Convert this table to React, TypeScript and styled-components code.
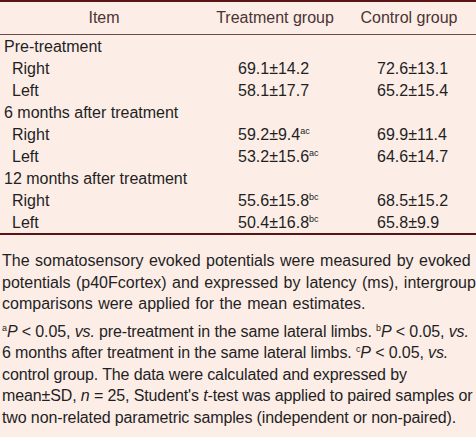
import React from 'react';
import styled, { createGlobalStyle } from 'styled-components';

const GlobalStyle = createGlobalStyle`
    html, body {
        margin: 0;
        padding: 0;
        background: #fdede7;
    }
    body {
        font-family: "Liberation Sans", Arial, sans-serif;
        color: #231f1f;
    }
`;

type Row =
    | { kind: 'group'; label: string }
    | { kind: 'value'; label: string; treat: string; treatSup?: string; ctrl: string };

const rows: Row[] = [
    { kind: 'group', label: 'Pre-treatment' },
    { kind: 'value', label: 'Right', treat: '69.1±14.2', ctrl: '72.6±13.1' },
    { kind: 'value', label: 'Left', treat: '58.1±17.7', ctrl: '65.2±15.4' },
    { kind: 'group', label: '6 months after treatment' },
    { kind: 'value', label: 'Right', treat: '59.2±9.4', treatSup: 'ac', ctrl: '69.9±11.4' },
    { kind: 'value', label: 'Left', treat: '53.2±15.6', treatSup: 'ac', ctrl: '64.6±14.7' },
    { kind: 'group', label: '12 months after treatment' },
    { kind: 'value', label: 'Right', treat: '55.6±15.8', treatSup: 'bc', ctrl: '68.5±15.2' },
    { kind: 'value', label: 'Left', treat: '50.4±16.8', treatSup: 'bc', ctrl: '65.8±9.9' },
];

export default function App() {
    return (
        <>
            <GlobalStyle />
            <Wrapper>
                <Table>
                    <thead>
                        <tr>
                            <HeadCell $width={208}>Item</HeadCell>
                            <HeadCell $width={134}>Treatment group</HeadCell>
                            <HeadCell>Control group</HeadCell>
                        </tr>
                    </thead>
                    <tbody>
                        {rows.map((row, i) =>
                            row.kind === 'group' ? (
                                <tr key={i}>
                                    <GroupCell colSpan={3}>{row.label}</GroupCell>
                                </tr>
                            ) : (
                                <tr key={i}>
                                    <LabelCell>{row.label}</LabelCell>
                                    <ValueCell $pad={30}>
                                        {row.treat}
                                        {row.treatSup && <Sup>{row.treatSup}</Sup>}
                                    </ValueCell>
                                    <ValueCell $pad={35}>{row.ctrl}</ValueCell>
                                </tr>
                            )
                        )}
                    </tbody>
                </Table>
                <Notes>
                    <Note $spread>
                        The somatosensory evoked potentials were measured by evoked potentials
                        (p40Fcortex) and expressed by latency (ms), intergroup comparisons were
                        applied for the mean estimates.
                    </Note>
                    <Note>
                        <Sup>a</Sup><i>P</i> &lt; 0.05, <i>vs.</i> pre-treatment in the same lateral
                        limbs. <Sup>b</Sup><i>P</i> &lt; 0.05, <i>vs.</i> 6 months after treatment in
                        the same lateral limbs. <Sup>c</Sup><i>P</i> &lt; 0.05, <i>vs.</i> control
                        group. The data were calculated and expressed by mean±SD, <i>n</i> = 25,
                        Student's <i>t</i>-test was applied to paired samples or two non-related
                        parametric samples (independent or non-paired).
                    </Note>
                </Notes>
            </Wrapper>
        </>
    );
}

const Wrapper = styled.div`
    width: 476px;
    font-size: 16px;
`;

const Table = styled.table`
    width: 100%;
    border-collapse: collapse;
    border-top: 2px solid #5a1616;
    border-bottom: 2px solid #5a1616;
    table-layout: fixed;
`;

const HeadCell = styled.th<{ $width?: number }>`
    ${(p) => (p.$width ? `width: ${p.$width}px;` : '')}
    font-weight: 400;
    color: #4a3434;
    text-align: center;
    height: 32px;
    padding: 0;
    border-bottom: 1px solid #6b4a4a;
`;

const GroupCell = styled.td`
    padding: 0 0 0 4px;
    height: 22px;
    line-height: 21px;
    white-space: nowrap;
`;

const LabelCell = styled.td`
    padding: 0 0 0 12px;
    height: 22px;
    line-height: 21px;
`;

const ValueCell = styled.td<{ $pad: number }>`
    padding: 0 0 0 ${(p) => p.$pad}px;
    height: 22px;
    line-height: 21px;
    white-space: nowrap;
`;

const Sup = styled.sup`
    font-size: 9px;
    line-height: 0;
    vertical-align: 6px;
`;

const Notes = styled.div`
    padding: 15px 0 0 2px;
    display: flex;
    flex-direction: column;
    gap: 6px;
`;

const Note = styled.p<{ $spread?: boolean }>`
    margin: 0;
    line-height: 21.5px;
    word-spacing: ${(p) => (p.$spread ? '1px' : '0')};
    letter-spacing: ${(p) => (p.$spread ? '0' : '-0.12px')};
`;
